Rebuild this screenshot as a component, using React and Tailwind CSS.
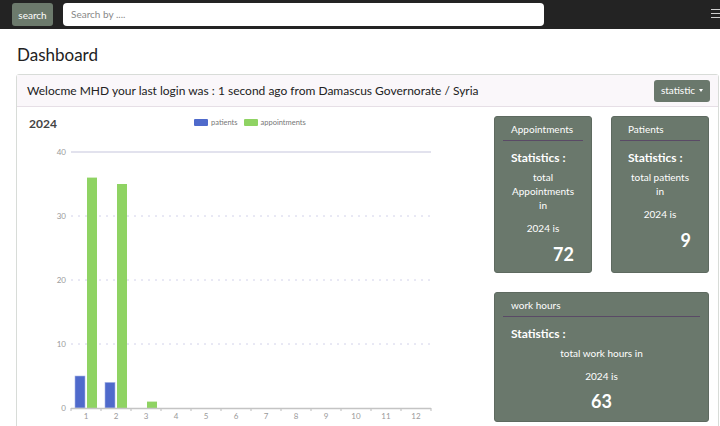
import React from "react";

const months = [1, 2, 3, 4, 5, 6, 7, 8, 9, 10, 11, 12];
const patients = [5, 4, 0, 0, 0, 0, 0, 0, 0, 0, 0, 0];
const appointments = [36, 35, 1, 0, 0, 0, 0, 0, 0, 0, 0, 0];

function Chart() {
  // page coords offset: x - 17, y - 107
  const x0 = 54;
  const y0 = 301;
  const step = 30;
  const unit = 6.4;
  return (
    <svg width="462" height="319" className="block">
      {[10, 20, 30].map((v) => (
        <line
          key={v}
          x1={x0}
          x2={x0 + 360}
          y1={y0 - v * unit}
          y2={y0 - v * unit}
          stroke="#d2d2ea"
          strokeDasharray="2 5"
        />
      ))}
      <line x1={x0} x2={x0 + 360} y1={y0 - 40 * unit} y2={y0 - 40 * unit} stroke="#c5c5dc" />
      {[0, 10, 20, 30, 40].map((v) => (
        <text key={v} x={x0 - 5} y={y0 - v * unit + 3} fontSize="8" fill="#9a9a9a" textAnchor="end">
          {v}
        </text>
      ))}
      {months.map((m, i) => {
        const cx = x0 + i * step;
        return (
          <g key={m}>
            {patients[i] > 0 && (
              <rect x={cx + 4} y={y0 - patients[i] * unit} width="10" height={patients[i] * unit} fill="#4f6acb" stroke="#a8b5e6" strokeWidth="0.6" />
            )}
            {appointments[i] > 0 && (
              <rect x={cx + 16} y={y0 - appointments[i] * unit} width="10" height={appointments[i] * unit} fill="#8fd363" />
            )}
            <text x={cx + 15} y={y0 + 11} fontSize="8" fill="#9a9a9a" textAnchor="middle">
              {m}
            </text>
            <line x1={cx} x2={cx} y1={y0} y2={y0 + 3} stroke="#bbb" />
          </g>
        );
      })}
      <line x1={x0 + 360} x2={x0 + 360} y1={y0} y2={y0 + 3} stroke="#bbb" />
      <line x1={x0} x2={x0 + 360} y1={y0 + 0.5} y2={y0 + 0.5} stroke="#c4c4c4" strokeWidth="1.5" />
    </svg>
  );
}

function StatCard({ title, children, number, numberClass, className }) {
  return (
    <div className={"rounded-[3px] bg-[#6a786c] text-white border border-[#5e6a60] " + className}>
      <div className="px-[8px] pt-[5px]">
        <div className="text-[10px] leading-[14px] pl-[8px] pb-[4px] border-b border-[#5a4a66]">{title}</div>
      </div>
      <div className="px-[16px] pt-[9px]">
        <div className="text-[12px] font-bold leading-[16px]">Statistics :</div>
        <div className="text-center text-[10px] leading-[14px] mt-[4px]">{children}</div>
        <div className={"text-[18px] font-bold leading-[22px] " + numberClass}>{number}</div>
      </div>
    </div>
  );
}

export default function App() {
  return (
    <div className="w-[720px] h-[426px] overflow-hidden bg-white" style={{ fontFamily: 'Lato, "Open Sans", sans-serif' }}>
      <div className="h-[29px] bg-[#232323] flex items-center relative">
        <button className="ml-[12px] w-[41px] h-[23px] rounded-[3px] bg-[#6c7a6c] text-white text-[10px] leading-none">search</button>
        <div className="ml-[10px] w-[481px] h-[23px] rounded-[4px] bg-white flex items-center pl-[8px] text-[10px] text-[#888]">Search by ....</div>
        <div className="absolute right-0 top-[9px] w-[9px] flex flex-col gap-[3px]">
          <div className="h-[1px] bg-[#cfcfcf]" />
          <div className="h-[1px] bg-[#cfcfcf]" />
          <div className="h-[1px] bg-[#cfcfcf]" />
        </div>
      </div>
      <div className="pl-[17px] pt-[14px] h-[45px] text-[17px] text-[#222] leading-[24px]">Dashboard</div>
      <div className="ml-[16px] w-[703px] border border-[#d8dcd8] rounded-t-[3px]">
        <div className="h-[32px] bg-[#faf7fa] border-b border-[#e6dfe6] flex items-center pl-[10px] pr-[8px]">
          <div className="text-[12px] text-[#222]">Welocme MHD your last login was : 1 second ago from Damascus Governorate / Syria</div>
          <button className="ml-auto w-[56px] h-[22px] rounded-[3px] bg-[#6a786c] text-white text-[10px] flex items-center justify-center gap-[4px]">
            statistic
            <span className="inline-block w-0 h-0 border-l-[2.5px] border-r-[2.5px] border-t-[3px] border-l-transparent border-r-transparent border-t-white" />
          </button>
        </div>
        <div className="flex">
          <div className="relative w-[462px] h-[320px]">
            <div className="absolute left-[12px] top-[8px] text-[12px] font-bold text-[#444]">2024</div>
            <div className="absolute left-[177px] top-[10px] flex items-center text-[7.5px] text-[#777]">
              <span className="w-[14px] h-[7px] bg-[#4f6acb] rounded-[1px]" />
              <span className="ml-[3px]">patients</span>
              <span className="ml-[6px] w-[14px] h-[7px] bg-[#8fd363] rounded-[1px]" />
              <span className="ml-[3px]">appointments</span>
            </div>
            <Chart />
          </div>
          <div className="ml-auto pr-[9px] pt-[9px]">
            <div className="flex gap-[19px]">
              <StatCard title="Appointments" number="72" numberClass="text-right pr-[1px] mt-[8px]" className="w-[98px] h-[157px]">
                <div>total</div>
                <div>Appointments</div>
                <div>in</div>
                <div className="mt-[9px]">2024 is</div>
              </StatCard>
              <StatCard title="Patients" number="9" numberClass="text-right pr-[1px] mt-[8px]" className="w-[98px] h-[157px]">
                <div>total patients</div>
                <div>in</div>
                <div className="mt-[9px]">2024 is</div>
              </StatCard>
            </div>
            <StatCard title="work hours" number="63" numberClass="text-center mt-[7px]" className="w-[215px] h-[130px] mt-[19px]">
              <div>total work hours in</div>
              <div className="mt-[9px]">2024 is</div>
            </StatCard>
          </div>
        </div>
      </div>
    </div>
  );
}
